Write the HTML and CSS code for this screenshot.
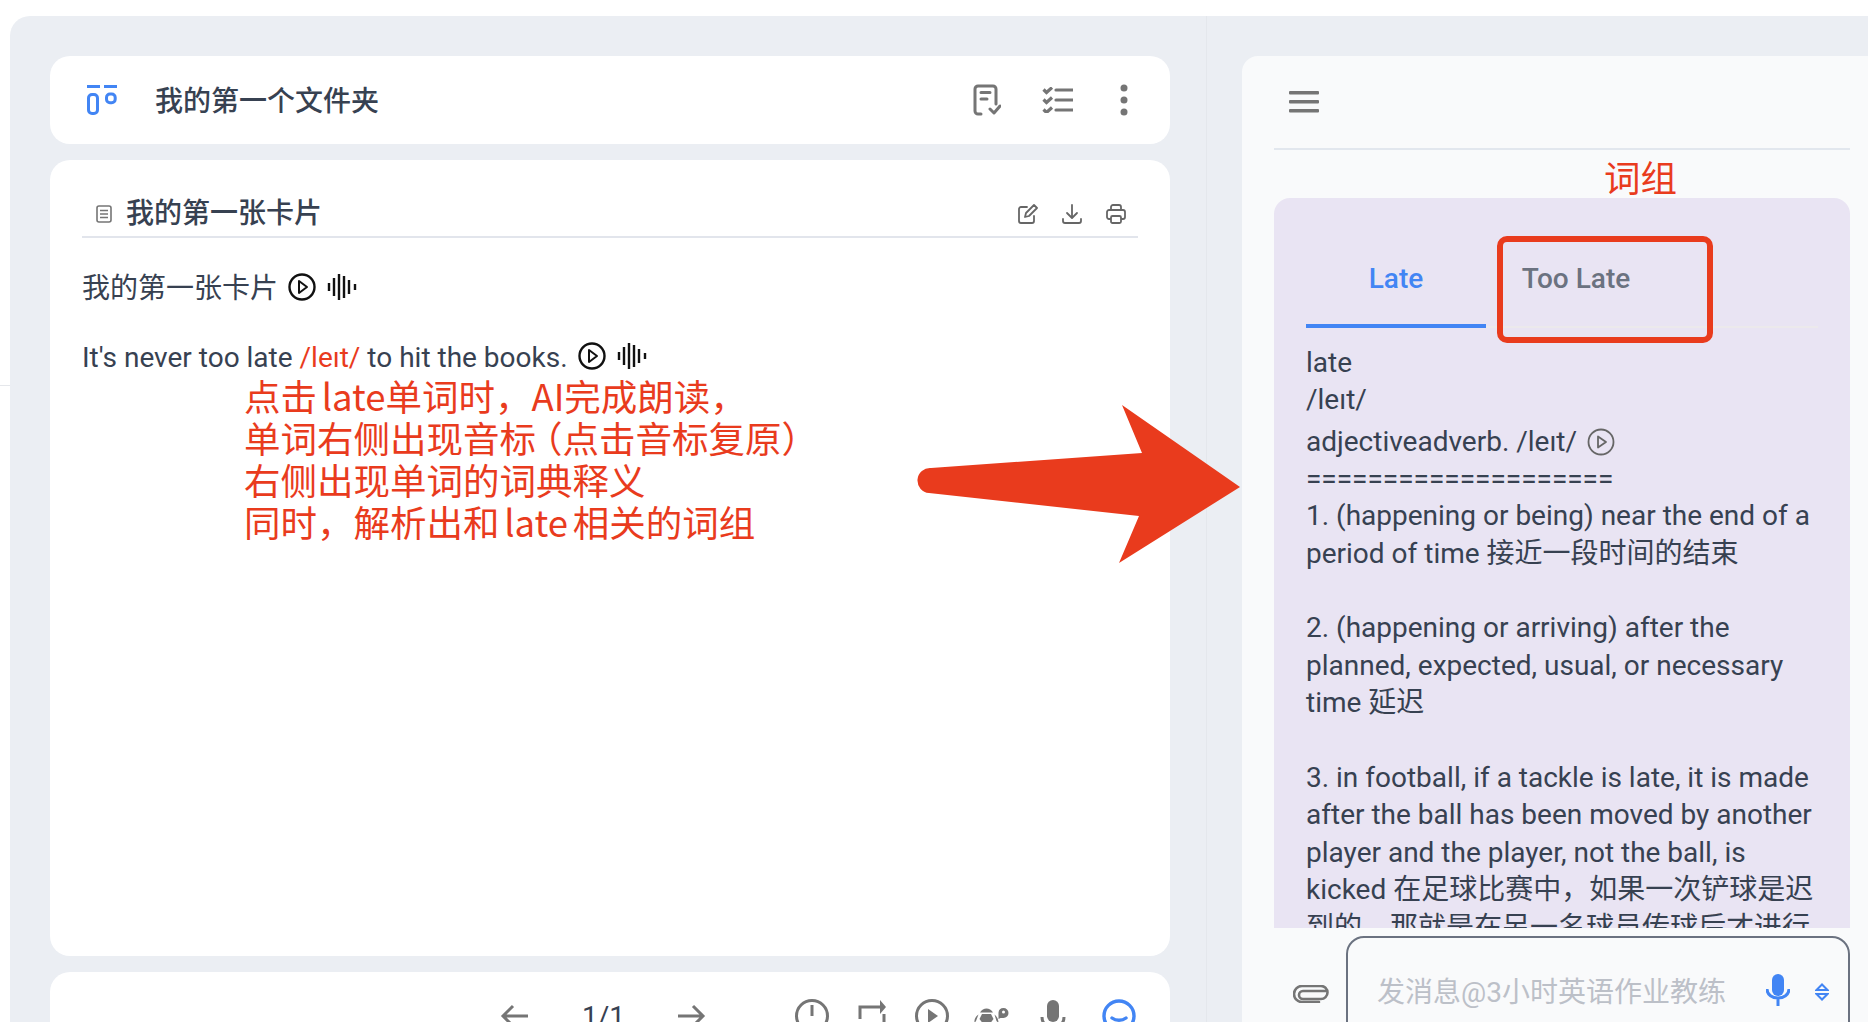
FILE: index.html
```html
<!DOCTYPE html>
<html lang="zh-CN">
<head>
<meta charset="utf-8">
<title>我的第一张卡片</title>
<link rel="stylesheet" href="styles.css">
</head>
<body>
<div class="tick"></div>
<div class="shell">
  <main class="panel">
    <section class="left">
      <header class="folder card">
        <svg class="logo" viewBox="0 0 30 30" fill="none" stroke="#4285f4" stroke-width="3"><path d="M0 1.500h13M17 1.500h13"/><rect x="1.500" y="9.500" width="9" height="19" rx="3.500"/><rect x="19.500" y="9" width="8.700" height="8.700" rx="3.400"/></svg>
        <h1 class="folder-title">我的第一个文件夹</h1>
        <svg class="ic-doc" viewBox="0 0 28 32" fill="none" stroke="#757575" stroke-width="3" stroke-linecap="round" stroke-linejoin="round"><path d="M8 30H5a3 3 0 0 1-3-3V5a3 3 0 0 1 3-3h15a3 3 0 0 1 3 3v15"/><path d="M8 8.500h9M8 15h6"/><path d="M17 25l4 4 6-7"/></svg>
        <svg class="ic-list" viewBox="0 0 31 26" fill="none" stroke="#757575" stroke-width="3.200"><path d="M1.500 2.500l3 3 5.500-5M1.500 12.500l3 3 5.500-5M1.500 22.500l3 3 5.500-5"/><path d="M14 3h17M14 13h17M14 23h17" stroke-linecap="round"/></svg>
        <svg class="ic-dots" viewBox="0 0 8 32" fill="#757575"><circle cx="4" cy="4" r="3.500"/><circle cx="4" cy="16" r="3.500"/><circle cx="4" cy="28" r="3.500"/></svg>
      </header>

      <article class="sheet card">
        <div class="sheet-head">
          <svg class="ic-page" viewBox="0 0 16 18" fill="none" stroke="#757575" stroke-width="1.600"><rect x="1" y="1" width="14" height="16" rx="2"/><path d="M4 5.500h8M4 9h8M4 12.500h8"/></svg>
          <h2 class="sheet-title">我的第一张卡片</h2>
          <svg class="ic-edit" viewBox="0 0 20 20" fill="none" stroke="#666" stroke-width="1.800" stroke-linecap="round" stroke-linejoin="round"><path d="M9 3H3a2 2 0 0 0-2 2v12a2 2 0 0 0 2 2h11a2 2 0 0 0 2-2v-5"/><path d="M7 13l1-4 8-8 3 3-8 8z"/></svg>
          <svg class="ic-down" viewBox="0 0 20 20" fill="none" stroke="#666" stroke-width="1.800" stroke-linecap="round" stroke-linejoin="round"><path d="M10 1v12M5 9l5 5 5-5"/><path d="M1 15v2a2 2 0 0 0 2 2h14a2 2 0 0 0 2-2v-2"/></svg>
          <svg class="ic-print" viewBox="0 0 20 20" fill="none" stroke="#666" stroke-width="1.800" stroke-linejoin="round"><path d="M5 6V3a2 2 0 0 1 2-2h6a2 2 0 0 1 2 2v3"/><path d="M5 15H3a2 2 0 0 1-2-2V8a2 2 0 0 1 2-2h14a2 2 0 0 1 2 2v5a2 2 0 0 1-2 2h-2"/><rect x="5" y="12" width="10" height="7" rx="1.500"/></svg>
        </div>
        <div class="line line-zh"><span>我的第一张卡片</span>
          <svg class="ic-play" viewBox="0 0 28 28" fill="none" stroke="#111" stroke-width="2.400"><circle cx="14" cy="14" r="12.500"/><path d="M11 8l8 6-8 6z" stroke-width="2" stroke-linejoin="round"/></svg>
          <svg class="ic-wave" viewBox="0 0 30 26" fill="none" stroke="#111" stroke-width="2.400"><path d="M2 9v8M7 4v18M12 0v26M17 2v22M22 6v14M28 10v6"/></svg>
        </div>
        <div class="line line-en"><span>It's never too late <span class="ipa">/leıt/</span> to hit the books.</span>
          <svg class="ic-play" viewBox="0 0 28 28" fill="none" stroke="#111" stroke-width="2.400"><circle cx="14" cy="14" r="12.500"/><path d="M11 8l8 6-8 6z" stroke-width="2" stroke-linejoin="round"/></svg>
          <svg class="ic-wave" viewBox="0 0 30 26" fill="none" stroke="#111" stroke-width="2.400"><path d="M2 9v8M7 4v18M12 0v26M17 2v22M22 6v14M28 10v6"/></svg>
        </div>
      </article>

      <footer class="player card">
        <svg class="ic-bar" viewBox="0 0 34 34" fill="none" stroke="#757575" stroke-width="3"><path d="M31 17H6M16 7L6 17l10 10"/></svg>
        <span class="pager">1/1</span>
        <svg class="ic-bar" viewBox="0 0 34 34" fill="none" stroke="#757575" stroke-width="3"><path d="M3 17h25M18 7l10 10-10 10"/></svg>
        <svg class="ic-bar ic-first" viewBox="0 0 34 34" fill="none" stroke="#757575" stroke-width="3"><circle cx="17" cy="17" r="15.500"/><path d="M17 6v11"/></svg>
        <svg class="ic-bar ic-tight" viewBox="0 0 34 34" fill="none" stroke="#757575" stroke-width="3"><path d="M5 20V8h22"/><path d="M25 1l6 7-6 7z" fill="#757575" stroke="none"/><path d="M29 15v12H8"/></svg>
        <svg class="ic-bar ic-tight" viewBox="0 0 34 34" fill="none" stroke="#757575" stroke-width="3"><circle cx="17" cy="17" r="15.500"/><path d="M13 10l10 7-10 7z" fill="#757575" stroke="none"/></svg>
        <svg class="ic-bar ic-turtle" viewBox="0 0 36 34" fill="#757575"><path d="M6 13.500C9 8 16 8 19 13.500z"/><path d="M8 15h9l2.500 5-3 4h-8l-3-4z"/><path d="M4.500 15.500L2 22l-1.500 2C0 20 2 17 4.500 15.500zM20.500 15.500c2 1.500 4 4.500 4 8.500l-2-2z"/><path fill-rule="evenodd" d="M29.500 9a5 5 0 0 1 0 10h-3l-2 1v-6.500A5 5 0 0 1 29.500 9zm0 2.500a1.500 1.500 0 1 0 0 3 1.500 1.500 0 0 0 0-3z"/></svg>
        <svg class="ic-bar ic-wide" viewBox="0 0 34 34" fill="none" stroke="#757575" stroke-width="3"><rect x="11" y="1" width="12" height="22" rx="6" fill="#757575" stroke="none"/><path d="M6 18c0 14 22 14 22 0M17 28v6"/></svg>
        <svg class="ic-bar" viewBox="0 0 34 34" fill="none" stroke="#4285f4" stroke-width="3.400" stroke-linecap="round"><circle cx="17" cy="17" r="15"/><path d="M10 19c4 3 10 3 14 0"/></svg>
      </footer>
    </section>

    <div class="split"></div>

    <aside class="right">
      <div class="menu-bar"><svg class="ic-menu" viewBox="0 0 30 22" fill="#757575"><rect y="0" width="30" height="3.400" rx="1"/><rect y="9" width="30" height="3.400" rx="1"/><rect y="18" width="30" height="3.400" rx="1"/></svg></div>
      <div class="dict">
        <div class="tabs">
          <div class="tab tab-on">Late</div>
          <div class="tab">Too Late</div>
        </div>
        <div class="dict-body">
          <div>late</div>
          <div>/leıt/</div>
          <div class="dict-pos"><span>adjectiveadverb. /leıt/</span><svg class="ic-play-sm" viewBox="0 0 28 28" fill="none" stroke="#666" stroke-width="1.800"><circle cx="14" cy="14" r="12.500"/><path d="M11 8.500l8 5.500-8 5.500z" stroke-linejoin="round"/></svg></div>
          <div>====================</div>
          <div>1. (happening or being) near the end of a</div>
          <div>period of time 接近一段时间的结束</div>
          <div class="blank"></div>
          <div>2. (happening or arriving) after the</div>
          <div>planned, expected, usual, or necessary</div>
          <div>time 延迟</div>
          <div class="blank"></div>
          <div>3. in football, if a tackle is late, it is made</div>
          <div>after the ball has been moved by another</div>
          <div>player and the player, not the ball, is</div>
          <div>kicked 在足球比赛中，如果一次铲球是迟</div>
          <div>到的，那就是在另一名球员传球后才进行</div>
        </div>
      </div>
      <div class="composer">
        <svg class="ic-clip" viewBox="0 0 36 18" fill="none" stroke="#757575" stroke-width="2.600" stroke-linecap="round"><path d="M33 6H10a4 4 0 0 0 0 8h18a6.500 6.500 0 0 0 0-13H9a8 8 0 0 0 0 16h17"/></svg>
        <div class="input">
          <span class="placeholder">发消息@3小时英语作业教练</span>
          <svg class="ic-mic" viewBox="0 0 24 32" fill="none" stroke="#4285f4" stroke-width="3"><rect x="6" y="0" width="12" height="22" rx="6" fill="#4285f4" stroke="none"/><path d="M1 15c0 12 22 12 22 0M12 25v7"/></svg>
          <svg class="ic-updown" viewBox="0 0 14 18" fill="none" stroke="#4285f4" stroke-width="2"><path d="M1.500 7L7 1.500 12.500 7zM1.500 11L7 16.500 12.500 11z"/></svg>
        </div>
      </div>
    </aside>
  </main>
</div>

<div class="note note-main">
  <div>点击 late单词时，AI完成朗读，</div>
  <div>单词右侧出现音标<span class="paren-l">（</span>点击音标复原）</div>
  <div>右侧出现单词的词典释义</div>
  <div>同时，解析出和 late 相关的词组</div>
</div>
<div class="note note-tag">词组</div>
<div class="red-box"></div>
<svg class="arrow" viewBox="0 0 324 160"><path d="M14 63L225 48 205 0 323 82 202 158 222 111 12 88A12.500 12.500 0 0 1 14 63z" fill="#e93b1d"/></svg>
</body>
</html>
```

FILE: styles.css
```css
* { box-sizing: border-box; }
html, body { margin: 0; height: 1022px; overflow: hidden; background: #fff; }
body {
  position: relative;
  font-family: Roboto, "Noto Sans CJK SC", sans-serif;
  color: #374151;
}
h1, h2 { margin: 0; font-weight: 500; }
svg { display: block; flex: none; }

.tick { position: absolute; left: 0; top: 385px; width: 10px; height: 1px; background: #e5e7eb; }
.shell { height: 1022px; padding: 16px 0 0 10px; overflow: hidden; }
.panel { display: flex; height: 1100px; background: #ebeef3; border-radius: 20px 0 0 0; }

.left { width: 1160px; padding: 40px 0 0 40px; display: flex; flex-direction: column; gap: 16px; flex: none; }
.card { background: #fff; border-radius: 20px; }

.folder { height: 88px; display: flex; align-items: center; padding-left: 37px; flex: none; }
.logo { width: 30px; height: 30px; }
.folder-title { font-size: 28px; line-height: 38px; margin: 3px 0 0 38px; flex: 1; }
.ic-doc { width: 28px; height: 32px; margin-right: 41px; }
.ic-list { width: 31px; height: 26px; margin-right: 47px; }
.ic-dots { width: 8px; height: 32px; margin-right: 42px; }

.sheet { height: 796px; padding: 0 32px; flex: none; }
.sheet-head { height: 78px; display: flex; align-items: center; padding: 32px 0 0 14px; border-bottom: 2px solid #e2e5ec; }
.ic-page { width: 16px; height: 18px; }
.sheet-title { font-size: 28px; line-height: 38px; margin: 0 0 1px 14px; flex: 1; }
.ic-edit, .ic-down, .ic-print { width: 20px; height: 20px; }
.ic-edit { margin-right: 24px; }
.ic-down { margin-right: 24px; }
.ic-print { margin-right: 12px; }

.line { display: flex; align-items: center; font-size: 28px; line-height: 38px; height: 38px; white-space: pre; }
.line-zh { margin-top: 32px; }
.line-en { margin-top: 31px; }
.ipa { color: #e93b1d; }
.ic-play { width: 28px; height: 28px; margin: 0 0 4px 10px; }
.ic-wave { width: 30px; height: 26px; margin: 0 0 4px 11px; }

.player { height: 88px; flex: none; display: flex; align-items: center; padding-left: 447px; }
.ic-bar { width: 34px; height: 34px; margin-right: 27px; }
.pager { font-size: 28px; margin: 0 50px 0 24px; color: #374151; }
.ic-first { margin-left: 59px; margin-right: 26px; }
.ic-tight { margin-right: 26px; }
.ic-turtle { margin-right: 26px; width: 36px; margin-left: -1px; }
.ic-wide { margin-right: 32px; }

.split { width: 72px; flex: none; background: linear-gradient(#e4e7ec, #e4e7ec) center / 1px 100% no-repeat; }

.right { flex: 1; margin-top: 40px; background: #f9fafb; border-radius: 16px 0 0 0; padding: 0 18px 0 32px; min-width: 0; }
.menu-bar { height: 94px; border-bottom: 2px solid #e2e7ee; display: flex; align-items: center; padding-left: 15px; }
.ic-menu { width: 30px; height: 22px; }

.dict { margin-top: 48px; height: 730px; background: #e9e4f3; border-radius: 16px 16px 0 0; overflow: hidden; padding: 0 32px; }
.tabs { display: flex; height: 130px; border-bottom: 2px solid #ece9ec; }
.tab { width: 180px; height: 130px; padding-top: 63px; text-align: center; font-size: 28px; line-height: 36px; font-weight: 500; color: #6b7280; }
.tab-on { color: #4285f4; border-bottom: 4px solid #4285f4; }
.dict-body { font-size: 28px; line-height: 37.400px; padding-top: 16px; }
.dict-body > div { white-space: nowrap; }
.blank { height: 37.400px; }
.dict-pos { display: flex; align-items: center; height: 41px; padding-top: 5px; }
.ic-play-sm { width: 28px; height: 28px; margin-left: 10px; }

.composer { display: flex; align-items: flex-start; margin-top: 8px; }
.ic-clip { width: 36px; height: 18px; margin: 49px 17px 0 19px; }
.input { flex: 1; height: 140px; border: 2px solid #6b7280; border-radius: 18px; display: flex; align-items: flex-start; padding: 36px 0 0 29px; }
.placeholder { font-size: 28px; line-height: 36px; margin-top: 1px; color: #bcc0c8; flex: 1; white-space: nowrap; }
.ic-mic { width: 24px; height: 32px; margin-right: 25px; }
.ic-updown { width: 14px; height: 18px; margin: 9px 19px 0 0; }

.note { position: absolute; color: #e93b1d; font-family: "Noto Sans CJK SC", sans-serif; font-size: 36.500px; line-height: 42px; font-weight: 400; word-spacing: -3.500px; white-space: nowrap; }
.note-main { left: 244px; top: 375px; }
.note-tag { left: 1604px; top: 156px; }
.paren-l { margin-left: -10px; }
.red-box { position: absolute; left: 1497px; top: 236px; width: 216px; height: 107px; border: 6px solid #e93b1d; border-radius: 10px; }
.arrow { position: absolute; left: 917px; top: 405px; width: 324px; height: 160px; }
```
